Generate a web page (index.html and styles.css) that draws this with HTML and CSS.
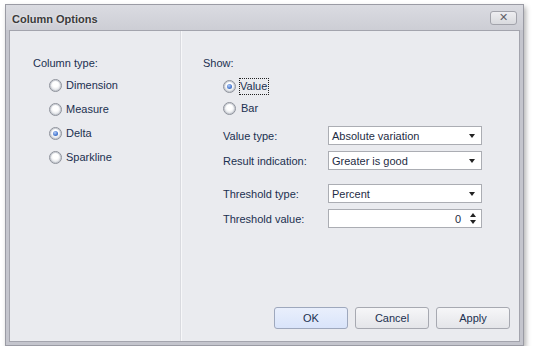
FILE: index.html
```html
<!DOCTYPE html>
<html lang="en">
<head>
    <meta charset="UTF-8">
    <title>Column Options</title>
    <link rel="stylesheet" href="styles.css">
</head>
<body>
    <div class="dialog">
        <div class="title-bar">
            <span class="title">Column Options</span>
            <button class="close-btn">&#x2715;</button>
        </div>

        <div class="client">
            <!-- Column type -->
            <div class="left-panel">
                <div class="caption">Column type:</div>
                <div class="radio-list">
                    <div class="radio-row"><span class="radio"></span>Dimension</div>
                    <div class="radio-row"><span class="radio"></span>Measure</div>
                    <div class="radio-row"><span class="radio checked"></span>Delta</div>
                    <div class="radio-row"><span class="radio"></span>Sparkline</div>
                </div>
            </div>

            <!-- Options -->
            <div class="right-panel">
                <div class="caption">Show:</div>
                <div class="show-list">
                    <div class="show-row"><span class="radio checked"></span><span class="focused">Value</span></div>
                    <div class="show-row"><span class="radio"></span><span class="plain">Bar</span></div>
                </div>

                <div class="field-group">
                    <div class="field">
                        <span class="field-label">Value type:</span>
                        <div class="combo">Absolute variation<span class="arrow"></span></div>
                    </div>
                    <div class="field">
                        <span class="field-label">Result indication:</span>
                        <div class="combo">Greater is good<span class="arrow"></span></div>
                    </div>
                </div>

                <div class="field-group second">
                    <div class="field">
                        <span class="field-label">Threshold type:</span>
                        <div class="combo">Percent<span class="arrow"></span></div>
                    </div>
                    <div class="field">
                        <span class="field-label">Threshold value:</span>
                        <div class="combo spin">0
                            <span class="spin-arrows"><span class="up"></span><span class="down"></span></span>
                        </div>
                    </div>
                </div>

                <div class="buttons">
                    <button class="btn btn-ok">OK</button>
                    <button class="btn">Cancel</button>
                    <button class="btn">Apply</button>
                </div>
            </div>
        </div>
    </div>
</body>
</html>
```

FILE: styles.css
```css
body {
    margin: 0;
    padding: 0;
    background: #ffffff;
    font-family: "Liberation Sans", Arial, sans-serif;
    font-size: 11px;
    color: #1b3050;
}

/* Window frame */
.dialog {
    margin: 4px 0 0 5px;
    width: 519px;
    height: 342px;
    box-sizing: border-box;
    border: 1px solid #9a9ba4;
    padding: 0 3px 3px 3px;
    background: #c4c5cd;
    display: flex;
    flex-direction: column;
    box-shadow: 2px 3px 5px rgba(0, 0, 0, 0.3);
}

/* Title bar */
.title-bar {
    height: 25px;
    display: flex;
    align-items: center;
    justify-content: space-between;
    padding: 0 3px 0 6px;
    margin: 0 -3px;
    background: linear-gradient(#dadbe1, #cdced5);
}

.title {
    font-weight: bold;
    font-size: 11px;
    color: #3b3b3b;
    padding-top: 2px;
    text-shadow: 0 0 3px rgba(255, 255, 255, 0.8);
}

.close-btn {
    width: 27px;
    height: 14px;
    padding: 0;
    margin: 1px 3px 0 0;
    border: 1px solid #a2a3ab;
    border-radius: 3px;
    background: linear-gradient(#eeeef1, #d9dade);
    font-family: "DejaVu Sans", sans-serif;
    font-size: 11px;
    font-weight: bold;
    line-height: 12px;
    color: #606168;
}

/* Client area */
.client {
    flex: 1;
    display: flex;
    border: 1px solid #a3a4ad;
    background: #eaebef;
}

.left-panel {
    width: 171px;
    padding: 25px 0 0 23px;
    box-sizing: border-box;
    border-right: 1px solid #d9dadf;
}

.right-panel {
    flex: 1;
    display: flex;
    flex-direction: column;
    padding: 25px 0 0 21px;
    border-left: 1px solid #f7f7f9;
}

.caption {
    line-height: 14px;
}

.radio-list {
    margin-top: 3px;
    padding-left: 16px;
}

.radio-row {
    height: 24px;
    display: flex;
    align-items: center;
}

.radio {
    width: 11px;
    height: 11px;
    border: 1px solid #8e929b;
    border-radius: 50%;
    margin-right: 4px;
    position: relative;
    background: radial-gradient(circle at 50% 40%, #ffffff 0, #ffffff 30%, #d3d6dc 85%);
    box-shadow: inset 0 0 0 1px #c9ccd3;
}

.radio.checked::after {
    content: "";
    position: absolute;
    left: 3px;
    top: 3px;
    width: 5px;
    height: 5px;
    border-radius: 50%;
    background: radial-gradient(circle at 40% 35%, #b6cdf7 0, #4f7fd4 55%, #22509f 100%);
}

.show-list {
    margin-top: 5px;
    padding-left: 20px;
}

.show-row {
    height: 22px;
    display: flex;
    align-items: center;
}

.focused {
    border: 1px dotted #222222;
    padding: 1px 1px 2px 0;
    margin-left: -1px;
}

.plain {
    padding-left: 1px;
}

/* Fields */
.field-group {
    margin-top: 7px;
    padding-left: 20px;
    display: flex;
    flex-direction: column;
    gap: 6px;
}

.field-group.second {
    margin-top: 14px;
}

.field {
    display: flex;
    align-items: center;
}

.field-label {
    width: 105px;
}

.combo {
    width: 154px;
    height: 19px;
    box-sizing: border-box;
    border: 1px solid #abadb3;
    background: #ffffff;
    padding-left: 3px;
    display: flex;
    align-items: center;
    position: relative;
    color: #1e2c44;
}

.arrow {
    position: absolute;
    right: 6px;
    top: 7px;
    border-left: 3.5px solid transparent;
    border-right: 3.5px solid transparent;
    border-top: 4px solid #222222;
}

.combo.spin {
    justify-content: flex-end;
    padding-right: 20px;
}

.spin-arrows {
    position: absolute;
    right: 5px;
    top: 3px;
    display: flex;
    flex-direction: column;
    gap: 3px;
}

.spin-arrows .up {
    border-left: 3.5px solid transparent;
    border-right: 3.5px solid transparent;
    border-bottom: 4px solid #222222;
}

.spin-arrows .down {
    border-left: 3.5px solid transparent;
    border-right: 3.5px solid transparent;
    border-top: 4px solid #222222;
}

/* Buttons */
.buttons {
    margin-top: auto;
    margin-bottom: 12px;
    margin-right: 9px;
    display: flex;
    justify-content: flex-end;
    gap: 7px;
}

.btn {
    width: 74px;
    height: 22px;
    border: 1px solid #a7a9b1;
    border-radius: 3px;
    background: linear-gradient(#f6f6f8, #e4e5e9);
    font-family: "Liberation Sans", Arial, sans-serif;
    font-size: 11px;
    color: #1b3050;
    padding: 0;
}

.btn-ok {
    border-color: #9ea8bd;
    background: linear-gradient(#e9effc, #d9e4fa);
}
```
